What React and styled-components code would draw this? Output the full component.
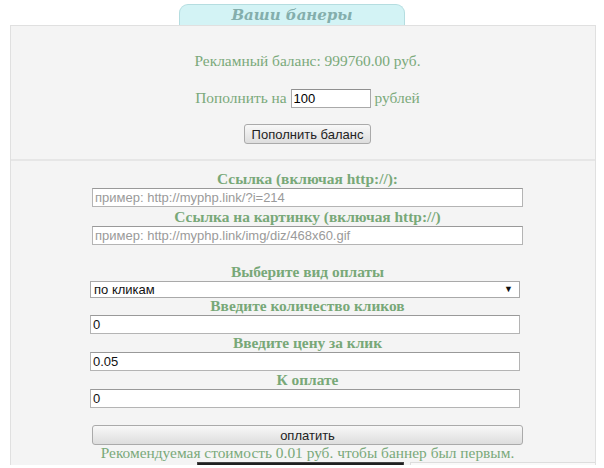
import React from "react";
import styled, { createGlobalStyle } from "styled-components";

const Global = createGlobalStyle`
  html, body { margin: 0; padding: 0; background: #fff; }
  body { width: 604px; height: 468px; overflow: hidden; font-family: "Liberation Serif", serif; }
`;

const Page = styled.div`
  width: 586px;
  margin-left: 10px;
  padding-top: 4px;
`;

const TabRow = styled.div`
  display: flex;
  padding-left: 169px;
`;

const Tab = styled.div`
  width: 224px;
  height: 20px;
  background: #d3f3f5;
  border: 1px solid #b5dde0;
  border-bottom: none;
  border-radius: 9px 9px 0 0;
  text-align: center;
  font-family: "DejaVu Serif", serif;
  font-style: italic;
  font-weight: bold;
  font-size: 15px;
  line-height: 21px;
  color: #84aeac;
`;

const Panel = styled.div`
  background: #f4f4f4;
  border: 1px solid #e0e0e0;
  border-bottom: none;
  height: 439px;
  overflow: hidden;
`;

const Section = styled.div`
  padding: ${(p) => p.$pad};
  border-top: ${(p) => (p.$divider ? "2px solid #e6e6e6" : "none")};
`;

const Block = styled.div`
  width: 431px;
  margin-left: ${(p) => p.$left || 81}px;
  display: flex;
  flex-direction: column;
  align-items: center;
`;

const Text = styled.div`
  color: #7aa97a;
  font-size: 15.4px;
  line-height: ${(p) => p.$lh || 18}px;
  margin-top: ${(p) => p.$mt || 0}px;
  white-space: nowrap;
`;

const Row = styled.div`
  display: flex;
  align-items: center;
  gap: 4px;
  height: 20px;
  margin-top: ${(p) => p.$mt || 0}px;
`;

const SmallInput = styled.input`
  width: 74px;
  height: 15px;
  padding: 1px 2px;
  border: 1px solid #a9a9a9;
  border-top-color: #8f8f8f;
  font-family: "Liberation Sans", sans-serif;
  font-size: 13px;
  background: #fff;
  outline: none;
`;

const Button = styled.button`
  height: 20px;
  margin-top: ${(p) => p.$mt || 0}px;
  padding: 0 7px;
  border: 1px solid #aaaaaa;
  border-radius: 3px;
  background: linear-gradient(#f8f8f8, #dddddd);
  font-family: "Liberation Sans", sans-serif;
  font-size: 13px;
  color: #222;
  align-self: ${(p) => (p.$full ? "stretch" : "center")};
`;

const Label = styled.div`
  color: #78a878;
  font-weight: bold;
  font-size: 15.4px;
  line-height: 16px;
  height: 16px;
  margin-top: ${(p) => p.$mt || 0}px;
  white-space: nowrap;
`;

const Field = styled.input`
  box-sizing: border-box;
  width: ${(p) => p.$w || 431}px;
  height: 19px;
  margin-top: 1px;
  margin-left: ${(p) => p.$shift || 0}px;
  padding: 0 2px;
  border: 1px solid #b4b4b4;
  border-top-color: #999;
  background: #fff;
  font-family: "Liberation Sans", sans-serif;
  font-size: 13px;
  color: #111;
  align-self: flex-start;
  outline: none;
  &::placeholder { color: #9a9a9a; }
`;

const SelectWrap = styled.div`
  position: relative;
  align-self: flex-start;
  margin-left: -2px;
  margin-top: 1px;
`;

const Select = styled.select`
  appearance: none;
  box-sizing: border-box;
  width: 430px;
  height: 17px;
  padding: 0 3px;
  border: 1px solid #a9a9a9;
  border-radius: 0;
  background: #fff;
  font-family: "Liberation Sans", sans-serif;
  font-size: 13px;
  line-height: 15px;
  color: #111;
  display: block;
`;

const Arrow = styled.span`
  position: absolute;
  right: 7px;
  top: 3px;
  font-size: 9px;
  color: #111;
  pointer-events: none;
`;

const BannerRow = styled.div`
  display: flex;
  gap: 6px;
  align-self: flex-start;
  margin-left: 105px;
  margin-top: 1px;
`;

const Banner = styled.div`
  width: 205px;
  height: 30px;
  background: ${(p) => (p.$dark ? "#202020" : "#f9f9f9")};
  border: 1px solid ${(p) => (p.$dark ? "#444" : "#ddd")};
`;

export default function App() {
  return (
    <>
      <Global />
      <Page>
        <TabRow>
          <Tab>Ваши банеры</Tab>
        </TabRow>
        <Panel>
          <Section $pad="26px 0 15px">
            <Block>
              <Text>Рекламный баланс: 999760.00 руб.</Text>
              <Row $mt={18}>
                <Text>Пополнить на</Text>
                <SmallInput defaultValue="100" />
                <Text>рублей</Text>
              </Row>
              <Button $mt={16}>Пополнить баланс</Button>
            </Block>
          </Section>
          <Section $divider $pad="10px 0 0">
            <Block>
              <Label>Ссылка (включая http://):</Label>
              <Field placeholder="пример: http://myphp.link/?i=214" />
              <Label $mt={2}>Ссылка на картинку (включая http://)</Label>
              <Field placeholder="пример: http://myphp.link/img/diz/468x60.gif" />
              <Label $mt={19}>Выберите вид оплаты</Label>
              <SelectWrap>
                <Select defaultValue="clicks">
                  <option value="clicks">по кликам</option>
                  <option value="shows">по показам</option>
                </Select>
                <Arrow>▼</Arrow>
              </SelectWrap>
              <Label>Введите количество кликов</Label>
              <Field $w={430} $shift={-2} defaultValue="0" />
              <Label $mt={1}>Введите цену за клик</Label>
              <Field $w={430} $shift={-2} defaultValue="0.05" />
              <Label $mt={1}>К оплате</Label>
              <Field $w={430} $shift={-2} defaultValue="0" />
              <Button $full $mt={17}>оплатить</Button>
              <Text $lh={16}>Рекомендуемая стоимость 0.01 руб. чтобы баннер был первым.</Text>
              <BannerRow>
                <Banner $dark />
                <Banner />
              </BannerRow>
            </Block>
          </Section>
        </Panel>
      </Page>
    </>
  );
}
